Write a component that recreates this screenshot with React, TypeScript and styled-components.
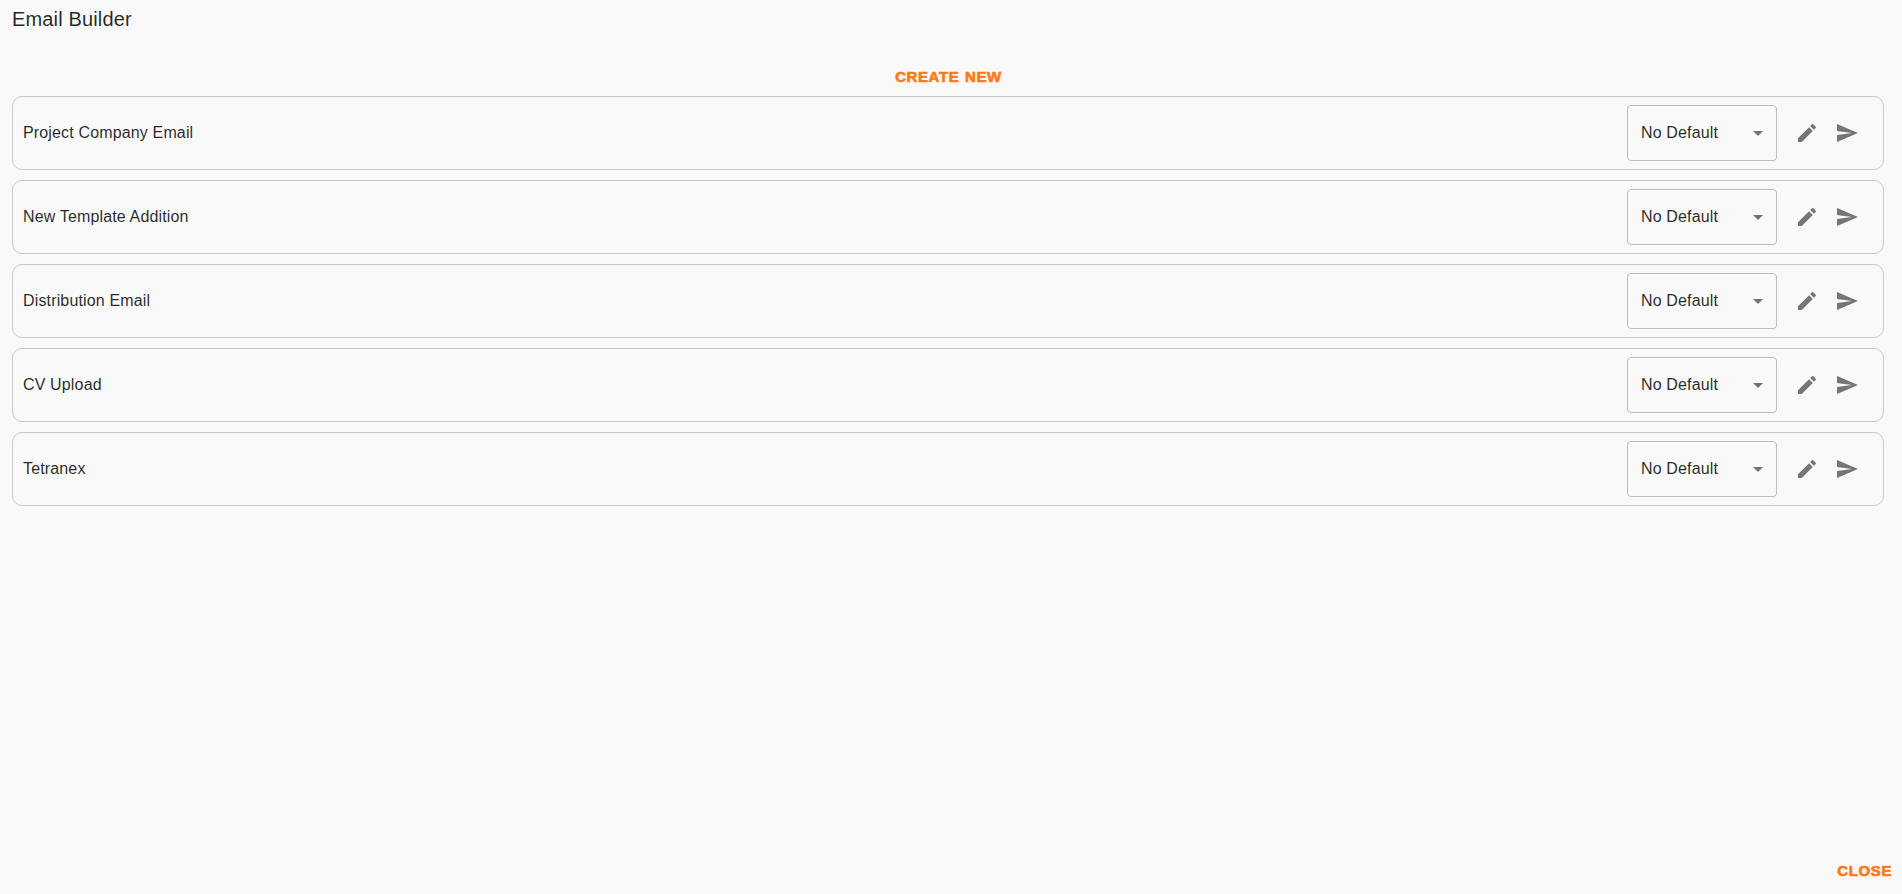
import React from "react";
import styled, { createGlobalStyle } from "styled-components";

const Global = createGlobalStyle`
  html, body { margin: 0; padding: 0; background: #f9f9f9; }
  body { font-family: "Liberation Sans", Arial, sans-serif; color: rgba(0,0,0,0.87); }
`;

const Page = styled.div`
  height: 894px;
  box-sizing: border-box;
  display: flex;
  flex-direction: column;
  background: #f9f9f9;
  overflow: hidden;
`;

const Title = styled.h2`
  margin: 0;
  padding: 7px 12px 0;
  height: 56px;
  box-sizing: border-box;
  font-size: 20px;
  line-height: 24px;
  font-weight: 400;
  letter-spacing: 0.15px;
  color: rgba(0, 0, 0, 0.85);
`;

const CreateRow = styled.div`
  display: flex;
  justify-content: center;
  padding-right: 5px;
  height: 40px;
`;

const TextAction = styled.button`
  border: 0;
  background: none;
  padding: 7px 8px 5px;
  font-family: "Liberation Sans", Arial, sans-serif;
  font-size: 15px;
  line-height: 24px;
  font-weight: 700;
  letter-spacing: 0.6px;
  word-spacing: 1px;
  text-transform: uppercase;
  color: #ff7a1a;
  -webkit-text-stroke: 0.7px #ff7a1a;
  cursor: pointer;
`;

const List = styled.div`
  display: flex;
  flex-direction: column;
  gap: 10px;
  padding: 0 18px 0 12px;
`;

const Row = styled.div`
  height: 74px;
  box-sizing: border-box;
  display: flex;
  align-items: center;
  padding: 0 16px 0 10px;
  border: 1px solid #cbcbcb;
  border-radius: 10px;
`;

const Name = styled.span`
  flex: 1;
  font-size: 16px;
  line-height: 24px;
  letter-spacing: 0.15px;
  color: rgba(0, 0, 0, 0.85);
`;

const SelectBox = styled.div`
  position: relative;
  width: 150px;
  height: 56px;
  box-sizing: border-box;
  display: flex;
  align-items: center;
  padding: 0 32px 0 13px;
  margin-right: 10px;
  border: 1px solid #bdbdbd;
  border-radius: 4px;
  font-size: 16px;
  letter-spacing: 0.15px;
  color: rgba(0, 0, 0, 0.85);
`;

const Arrow = styled.svg`
  position: absolute;
  right: 6px;
  top: 15px;
  width: 24px;
  height: 24px;
  fill: rgba(0, 0, 0, 0.54);
`;

const IconButton = styled.button`
  width: 40px;
  height: 40px;
  padding: 8px;
  border: 0;
  background: none;
  display: flex;
  align-items: center;
  justify-content: center;
  cursor: pointer;
`;

const Icon = styled.svg`
  width: 24px;
  height: 24px;
  flex: none;
  fill: #757575;
`;

const Footer = styled.div`
  margin-top: auto;
  display: flex;
  justify-content: flex-end;
  padding: 0 2px 6px 0;
`;

const names = [
  "Project Company Email",
  "New Template Addition",
  "Distribution Email",
  "CV Upload",
  "Tetranex",
];

export default function App() {
  return (
    <Page>
      <Global />
      <Title>Email Builder</Title>
      <CreateRow>
        <TextAction>Create New</TextAction>
      </CreateRow>
      <List>
        {names.map((name) => (
          <Row key={name}>
            <Name>{name}</Name>
            <SelectBox>
              No Default
              <Arrow viewBox="0 0 24 24">
                <path d="M7 10l5 5 5-5z" />
              </Arrow>
            </SelectBox>
            <IconButton aria-label="edit">
              <Icon viewBox="0 0 24 24">
                <path d="M3 17.25V21h3.75L17.81 9.94l-3.75-3.75L3 17.25zM20.71 7.04c.39-.39.39-1.02 0-1.41l-2.34-2.34a.9959.9959 0 0 0-1.41 0l-1.83 1.83 3.75 3.75 1.83-1.83z" />
              </Icon>
            </IconButton>
            <IconButton aria-label="send">
              <Icon viewBox="0 0 24 24">
                <path d="M2.01 21 23 12 2.01 3 2 10l15 2-15 2z" />
              </Icon>
            </IconButton>
          </Row>
        ))}
      </List>
      <Footer>
        <TextAction>Close</TextAction>
      </Footer>
    </Page>
  );
}
